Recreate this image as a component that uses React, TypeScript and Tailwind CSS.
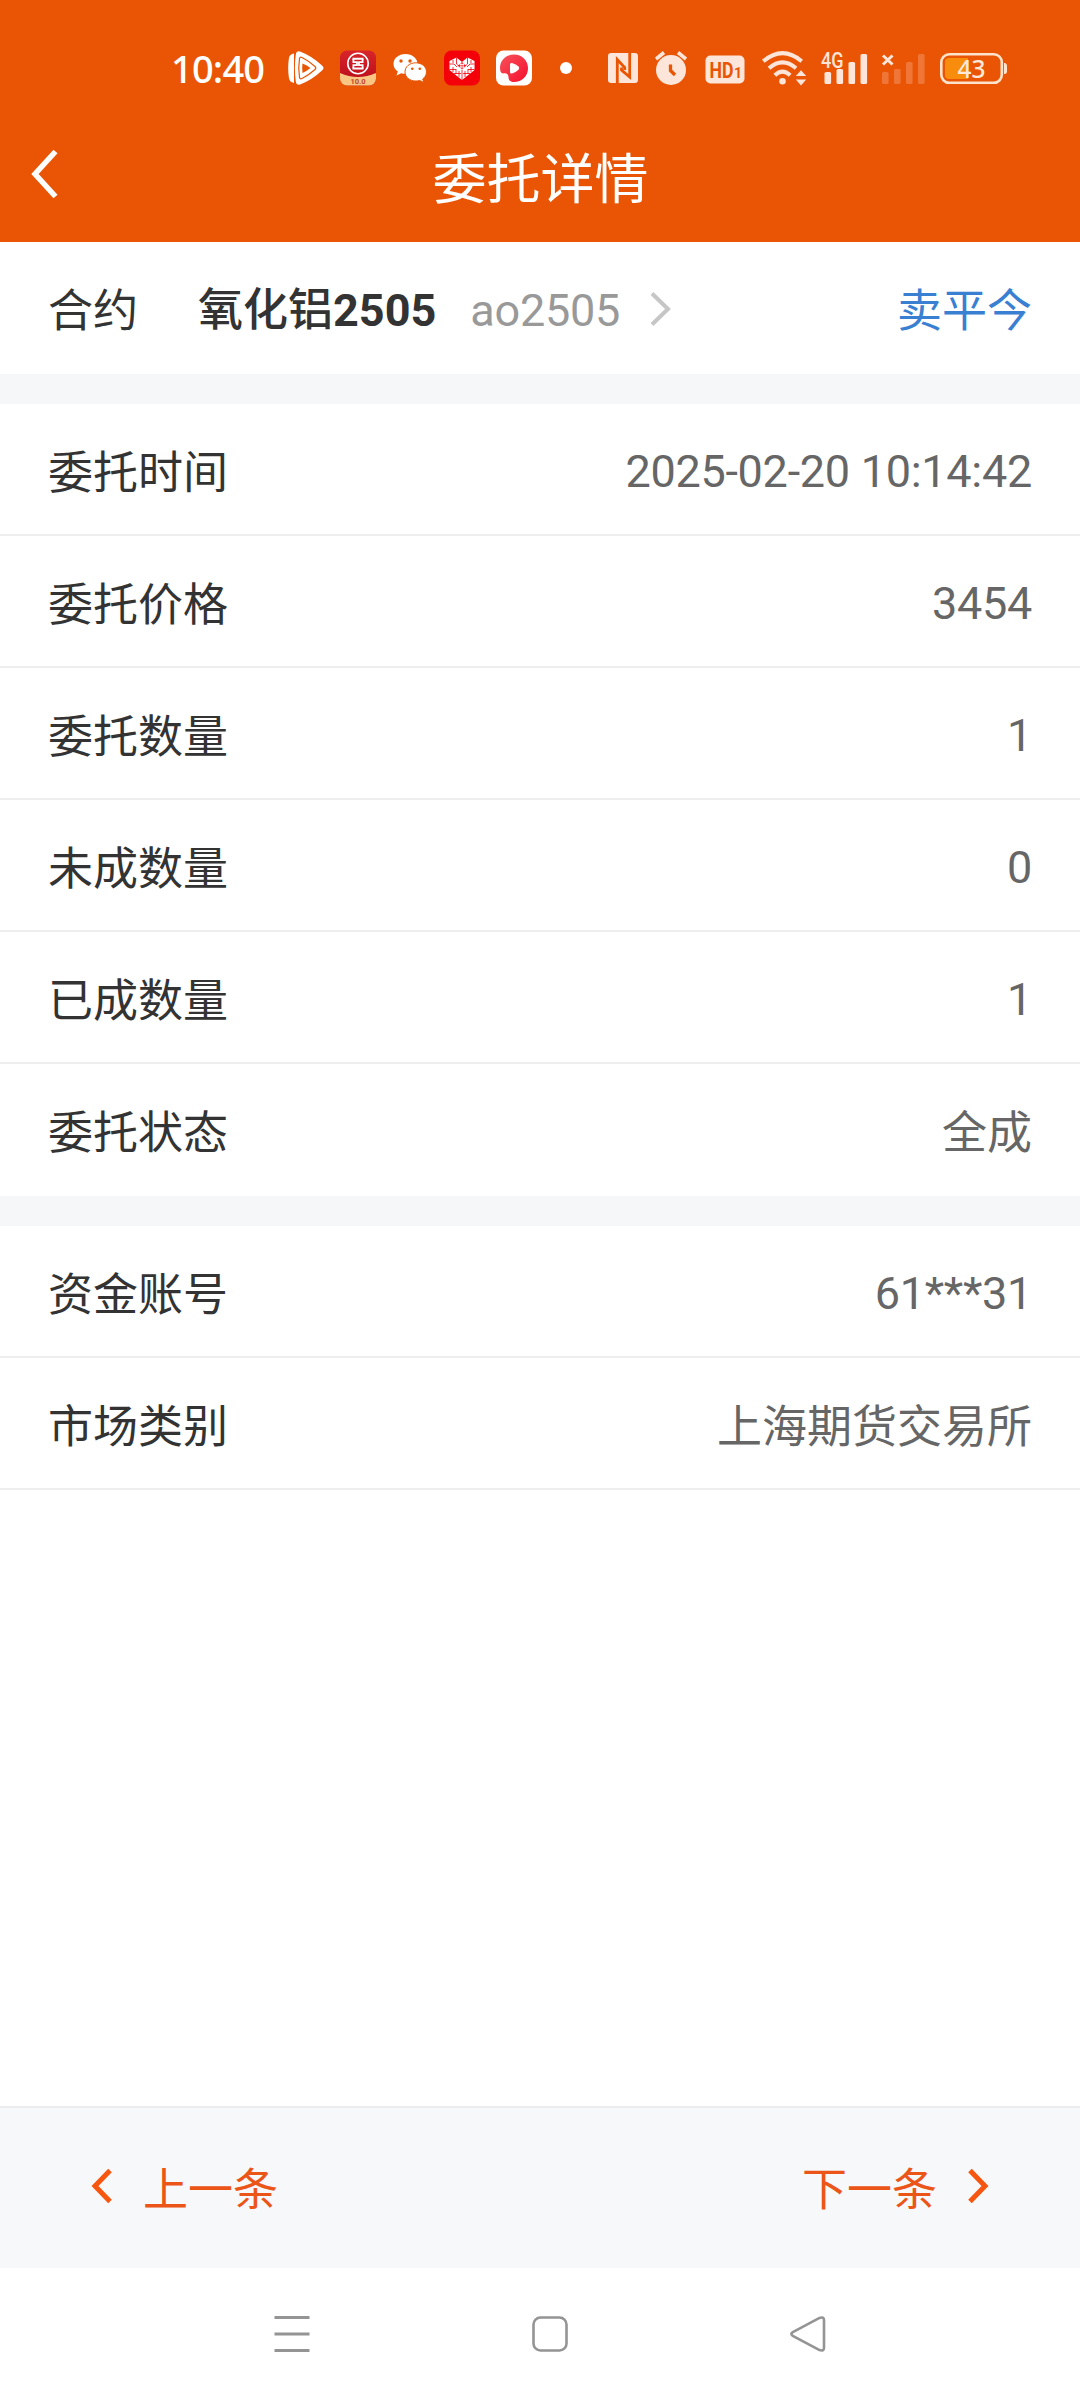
import React from "react";

const FONT = "font-[Roboto,'Noto_Sans_CJK_SC',sans-serif]";

type Item = { label: string; value: string };

const orderRows: Item[] = [
  { label: "委托时间", value: "2025-02-20 10:14:42" },
  { label: "委托价格", value: "3454" },
  { label: "委托数量", value: "1" },
  { label: "未成数量", value: "0" },
  { label: "已成数量", value: "1" },
  { label: "委托状态", value: "全成" },
];

const accountRows: Item[] = [
  { label: "资金账号", value: "61***31" },
  { label: "市场类别", value: "上海期货交易所" },
];

function Row({ item, border }: { item: Item; border: boolean }) {
  const latin = /^[\x20-\x7e]+$/.test(item.value);
  return (
    <div
      className={
        border
          ? "flex h-[132px] items-center justify-between border-b-2 border-[#eeeeee] px-12 pt-1"
          : "flex h-[132px] items-center justify-between px-12 pt-0.5"
      }
    >
      <span className="pt-[5px] text-[#333333]">{item.label}</span>
      <span className={latin ? "pt-0.5 tracking-[-0.28px] text-[#666666]" : "pt-[5px] text-[#666666]"}>
        {item.value}
      </span>
    </div>
  );
}

function VideoIcon() {
  return (
    <svg className="ml-6 h-9 w-9" viewBox="0 0 36 36" fill="none">
      <path d="M6 3.500C3 4 1 5.500.8 9C0 15 0 21 .8 27C1 30.500 3 32.500 6 33Z" fill="#fff" />
      <path
        d="M12 1.500Q8.500.5 7.800 4.500Q6 18 7.800 31.500Q8.500 35.500 12 34.500Q24 30 34 20.500Q37 18 34 15.500Q24 6 12 1.500Z"
        fill="#fff"
      />
      <path
        d="M11.500 8.500Q10 18 11.500 27.500Q12 29.500 14 28.500Q21 25 27 19.500Q28.500 18 27 16.500Q21 11 14 7.500Q12 6.500 11.500 8.500Z"
        stroke="#e85504"
        strokeWidth="1.200"
      />
      <path d="M14.500 13.500Q13.800 18 14.500 23Q19 20.800 22.500 18Q19 15 14.500 13.500Z" fill="#e85504" />
    </svg>
  );
}

function BankIcon() {
  return (
    <svg className="ml-4 h-9 w-9" viewBox="0 0 36 36" fill="none">
      <defs>
        <linearGradient id="bankRed" x1="0" y1="0" x2="0" y2="1">
          <stop offset="0" stopColor="#d9252b" />
          <stop offset="1" stopColor="#b50a18" />
        </linearGradient>
        <clipPath id="bankClip">
          <rect y=".5" width="36" height="35" rx="7" />
        </clipPath>
      </defs>
      <g clipPath="url(#bankClip)">
        <rect width="36" height="36" fill="url(#bankRed)" />
        <path d="M0 23Q18 31 36 23V36H0Z" fill="#f9c582" />
        <circle cx="18" cy="13.500" r="10.200" stroke="#fff" strokeWidth="1.600" />
        <path d="M12.500 8.800H23.500M12.500 18.500H23.500" stroke="#fff" strokeWidth="2" />
        <path d="M13.400 9V12.200H17V15.100H13.400V18.500M22.600 9V12.200H19V15.100H22.600V18.500" stroke="#fff" strokeWidth="1.800" />
        <text x="18" y="34" textAnchor="middle" fontSize="7.500" fontWeight="700" fontFamily="Roboto" fill="#c0442c">
          10.0
        </text>
      </g>
    </svg>
  );
}

function ChatIcon() {
  return (
    <svg className="ml-[17px] h-9 w-[34px]" viewBox="0 0 34 36" fill="none">
      <path
        d="M12.500 4C5.500 4 .5 8.400.5 14C.5 17.200 2.200 19.800 4.800 21.500L3.500 25.500L8.200 23.200Q10.300 23.800 12.500 23.800C19.500 23.800 24.500 19.500 24.500 14S19.500 4 12.500 4Z"
        fill="#fff"
      />
      <path
        d="M22.800 12.800C16.600 12.800 12 16.700 12 21.900S16.600 31 22.800 31Q24.700 31 26.700 30.500L30.800 32.500L29.700 29C32 27.400 33.500 24.900 33.500 21.900C33.500 16.700 28.800 12.800 22.800 12.800Z"
        fill="#fff"
        stroke="#e85504"
        strokeWidth="1"
      />
      <g fill="#e85504">
        <circle cx="8" cy="11" r="1.700" />
        <circle cx="17" cy="11" r="1.700" />
        <circle cx="19.300" cy="18.800" r="1.300" />
        <circle cx="26.800" cy="18.800" r="1.300" />
      </g>
    </svg>
  );
}

function HeartIcon() {
  return (
    <svg className="ml-[17px] h-9 w-9" viewBox="0 0 36 36" fill="none">
      <rect y=".5" width="36" height="35" rx="7.500" fill="#f4000b" />
      <path d="M18 12L12.500 7.500L5.500 11V20L18 30L30.500 20V11L23.500 7.500Z" fill="#fff" />
      <g stroke="#f4000b" strokeWidth=".8">
        <path d="M12.500 7.500V14L18 19L23.500 14V7.500M5.500 14H10L13 17M30.500 14H26L23 17M18 20V30" />
        <path d="M9 10V13M27 10V13M9 17V22M27 17V22M12 19V24M24 19V24M15 21V27M21 21V27" />
        <path d="M5.500 19.500H12M24 19.500H30.500M10 23.500H17M19 23.500H26" />
      </g>
      <path d="M14 15.500L18 12L22 15.500L18 19.500Z" fill="#f4000b" />
      <path d="M15.500 14.600H20.500M15.500 17H20.500M16.900 12.800V19M19.200 12.800V19" stroke="#fff" strokeWidth=".9" />
    </svg>
  );
}

function PlayerIcon() {
  return (
    <svg className="ml-4 h-9 w-9" viewBox="0 0 36 36" fill="none">
      <defs>
        <linearGradient id="playerRed" x1="0" y1="0" x2="1" y2="1">
          <stop offset="0" stopColor="#f7525a" />
          <stop offset="1" stopColor="#f50f2e" />
        </linearGradient>
      </defs>
      <rect y=".5" width="36" height="35" rx="7.500" fill="#fff" />
      <path
        d="M18 4.500C10 4.500 4 10.500 4 18C4 21 5 23.500 7 23.500C10 22.500 12.500 24 12.500 27C12.500 29.500 13.500 32 18 32C26 32 32 26 32 18.200S26 4.500 18 4.500Z"
        fill="url(#playerRed)"
      />
      <path
        d="M14 14.500Q14 12.500 16 13Q20 14.200 22.500 16.500Q24 18 22.500 19.700Q20 22.300 16 23.500Q14 24 14 22Z"
        fill="#fff"
      />
    </svg>
  );
}

function NfcIcon() {
  return (
    <svg className="ml-9 h-9 w-[30px]" viewBox="0 0 30 36" fill="none">
      <rect y="3" width="30" height="30" rx="3" fill="#fde5d9" />
      <path d="M9.300 33V9.500L16.700 17.500V20M21.700 3V27L13.500 20V17.500" stroke="#e85504" strokeWidth="2.800" />
    </svg>
  );
}

function AlarmIcon() {
  return (
    <svg className="ml-[17px] h-9 w-8" viewBox="0 0 32 36" fill="none">
      <circle cx="16" cy="20" r="15" fill="#fde5d9" />
      <path d="M1 9L9 2.500M31 9L23 2.500" stroke="#fde5d9" strokeWidth="3.600" />
      <path d="M15.500 14.500V20.500L20 25" stroke="#e85504" strokeWidth="3.300" />
    </svg>
  );
}

function HdIcon() {
  return (
    <svg className="ml-[18px] h-9 w-10" viewBox="0 0 40 36" fill="none">
      <rect x=".5" y="5.500" width="39" height="28" rx="5" fill="#fde5d9" />
      <g fontFamily="Roboto" fontWeight="700" fill="#e85504">
        <text x="4.500" y="27.500" fontSize="22.500" textLength="24" lengthAdjust="spacingAndGlyphs">
          HD
        </text>
        <text x="29" y="27.500" fontSize="14">
          1
        </text>
      </g>
    </svg>
  );
}

function WifiIcon() {
  return (
    <svg className="ml-[17px] h-9 w-[45px]" viewBox="0 0 45 36" fill="none">
      <g stroke="#fde5d9" strokeWidth="4">
        <path d="M1.300 11.200Q20.500-5 39.700 11.200" />
        <path d="M7 18.200Q20.500 6.500 34 18.200" />
        <path d="M12.800 25.200Q20.500 18 28.200 25.200" />
      </g>
      <circle cx="20.500" cy="31.300" r="3.300" fill="#fde5d9" />
      <path d="M39 20.300L44.200 26H33.800ZM39 35.500L44.200 29.500H33.800Z" fill="#fde5d9" />
    </svg>
  );
}

function SignalIcon() {
  return (
    <svg className="ml-[13px] h-9 w-[48px] overflow-visible" viewBox="0 0 48 36" fill="#fde5d9">
      <text
        x="1"
        y="17.500"
        fontSize="21.500"
        fontWeight="500"
        fontFamily="Roboto"
        textLength="22.500"
        lengthAdjust="spacingAndGlyphs"
      >
        4G
      </text>
      <rect x="4.500" y="22" width="6.600" height="12" rx="1.500" />
      <rect x="16.500" y="19" width="6.600" height="15" rx="1.500" />
      <rect x="28.500" y="12" width="6.600" height="22" rx="1.500" />
      <rect x="40.500" y="4" width="6.600" height="30" rx="1.500" />
    </svg>
  );
}

function NoSignalIcon() {
  return (
    <svg className="ml-[13px] h-9 w-[45px]" viewBox="0 0 45 36" fill="#ef7636">
      <path d="M2 5.500L11.500 14.500M11.500 5.500L2 14.500" stroke="#fde5d9" strokeWidth="3" />
      <rect x="1" y="22" width="6.600" height="12" rx="1.500" />
      <rect x="13" y="19" width="6.600" height="15" rx="1.500" />
      <rect x="25" y="12" width="6.600" height="22" rx="1.500" />
      <rect x="37" y="4" width="6.600" height="30" rx="1.500" />
    </svg>
  );
}

function BatteryIcon() {
  return (
    <svg className="ml-[14px] h-9 w-[68px]" viewBox="0 0 68 36" fill="none">
      <path d="M9 8H28V29H9Q5 29 5 25V12Q5 8 9 8Z" fill="#f78c0d" />
      <rect x="1.300" y="4.300" width="60.500" height="28.500" rx="8" stroke="#fde3cb" strokeWidth="2.600" />
      <path d="M64 13H65Q67 13.500 67 15.500V21.500Q67 23.500 65 24H64Z" fill="#fde3cb" />
      <text
        x="17.500"
        y="27.500"
        fontSize="24.500"
        fontWeight="500"
        fontFamily="'Noto Sans'"
        textLength="28"
        lengthAdjust="spacingAndGlyphs"
        fill="#fde9d8"
      >
        43
      </text>
    </svg>
  );
}

export default function App() {
  return (
    <div className={`${FONT} flex h-[2400px] w-[1080px] flex-col bg-white text-[45px] leading-[60px]`}>
      <header className="h-[242px] bg-[#e95504] text-white">
        <div className="flex h-[120px] items-center pt-4 pl-[171px]">
          <span className="w-[93px] font-['Noto_Sans',sans-serif] text-[38px] font-medium tracking-[-0.8px] whitespace-nowrap">
            10:40
          </span>
          <VideoIcon />
          <BankIcon />
          <ChatIcon />
          <HeartIcon />
          <PlayerIcon />
          <span className="ml-7 size-3 rounded-full bg-white" />
          <NfcIcon />
          <AlarmIcon />
          <HdIcon />
          <WifiIcon />
          <SignalIcon />
          <NoSignalIcon />
          <BatteryIcon />
        </div>
        <div className="grid h-[118px] grid-cols-[108px_1fr_108px] items-center">
          <svg className="-mt-2.5 ml-[30px] h-[50px] w-[30px]" viewBox="0 0 30 50" fill="none">
            <path d="M25.500 2.500L5 25L25.500 47.500" stroke="#fff" strokeWidth="5.500" />
          </svg>
          <h1 className="pt-[3px] pl-px text-center text-[54px]">委托详情</h1>
        </div>
      </header>

      <main className="flex flex-1 flex-col">
        <section className="flex h-[132px] items-center px-12 pt-0.5">
          <span className="w-[150px] pt-[5px] text-[#333333]">合约</span>
          <span className="pt-[3px] font-bold text-[#333333]">
            <span className="font-medium">氧化铝</span>2505
          </span>
          <span className="ml-[34px] pt-[3px] tracking-[-0.28px] text-[#999999]">ao2505</span>
          <svg className="ml-[30px] h-9 w-[22px]" viewBox="0 0 22 36" fill="none">
            <path d="M2 2.500L18 18L2 33.500" stroke="#c6c6c6" strokeWidth="4" />
          </svg>
          <span className="ml-auto pt-[5px] text-[#3a80d2]">卖平今</span>
        </section>

        <div className="h-[30px] bg-[#f6f7f9]" />
        <section>
          {orderRows.map((r, i) => (
            <Row key={r.label} item={r} border={i < orderRows.length - 1} />
          ))}
        </section>
        <div className="h-[30px] bg-[#f6f7f9]" />
        <section>
          {accountRows.map((r) => (
            <Row key={r.label} item={r} border />
          ))}
        </section>
      </main>

      <div className="flex h-[162px] items-center justify-between border-t-2 border-[#ebecee] bg-[#f7f8fa] px-[91px] text-[#ec5518]">
        <button className="flex items-center">
          <svg className="-mt-1 h-9 w-[22px]" viewBox="0 0 22 36" fill="none">
            <path d="M19 2.500L4 18L19 33.500" stroke="#f65610" strokeWidth="5" />
          </svg>
          <span className="ml-[30px] pt-[5px]">上一条</span>
        </button>
        <button className="flex items-center">
          <span className="mr-[30px] pt-[5px]">下一条</span>
          <svg className="-mt-1 h-9 w-[22px]" viewBox="0 0 22 36" fill="none">
            <path d="M3 2.500L18 18L3 33.500" stroke="#f65610" strokeWidth="5" />
          </svg>
        </button>
      </div>

      <nav className="flex h-[132px] items-center gap-[222px] pl-[274px]">
        <svg className="h-9 w-9" viewBox="0 0 36 36" fill="none" stroke="#949494" strokeWidth="3">
          <path d="M.5 1.500H35.500M.5 18H35.500M.5 34.500H35.500" />
        </svg>
        <svg className="h-9 w-9" viewBox="0 0 36 36" fill="none" stroke="#949494" strokeWidth="2.600">
          <rect x="1.500" y="1.500" width="33" height="33" rx="7" />
        </svg>
        <svg className="h-9 w-9" viewBox="0 0 36 36" fill="none" stroke="#949494" strokeWidth="2.600">
          <path d="M2.800 16.200L29.500 1.900Q34 .5 34 4V32Q34 35.500 29.500 34.100L2.800 19.800Q0 18 2.800 16.200Z" />
        </svg>
      </nav>
    </div>
  );
}
